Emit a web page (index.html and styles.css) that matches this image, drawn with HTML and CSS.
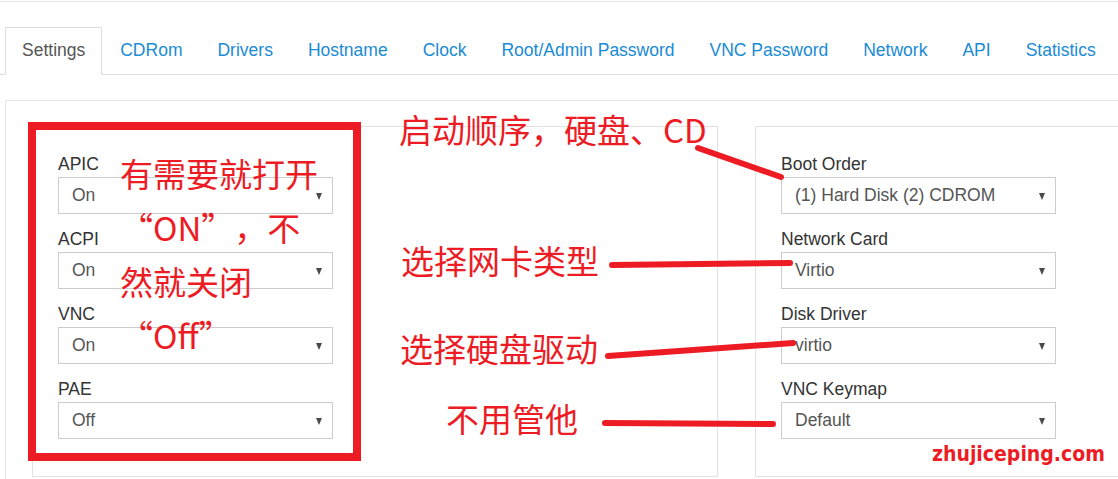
FILE: index.html
```html
<!DOCTYPE html>
<html lang="zh-CN">
<head>
<meta charset="utf-8">
<title>VPS Settings</title>
<link rel="stylesheet" href="styles.css">
</head>
<body>
<div class="page">
  <div class="topline"></div>
  <ul class="tabs">
    <li class="tab active">Settings</li>
    <li class="tab">CDRom</li>
    <li class="tab">Drivers</li>
    <li class="tab">Hostname</li>
    <li class="tab">Clock</li>
    <li class="tab">Root/Admin Password</li>
    <li class="tab">VNC Password</li>
    <li class="tab">Network</li>
    <li class="tab">API</li>
    <li class="tab">Statistics</li>
  </ul>
  <div class="content">
    <div class="panel">
      <div class="field"><div class="label">APIC</div><div class="select"><span>On</span><i class="caret"></i></div></div>
      <div class="field"><div class="label">ACPI</div><div class="select"><span>On</span><i class="caret"></i></div></div>
      <div class="field"><div class="label">VNC</div><div class="select"><span>On</span><i class="caret"></i></div></div>
      <div class="field"><div class="label">PAE</div><div class="select"><span>Off</span><i class="caret"></i></div></div>
    </div>
    <div class="panel">
      <div class="field"><div class="label">Boot Order</div><div class="select"><span>(1) Hard Disk (2) CDROM</span><i class="caret"></i></div></div>
      <div class="field"><div class="label">Network Card</div><div class="select"><span>Virtio</span><i class="caret"></i></div></div>
      <div class="field"><div class="label">Disk Driver</div><div class="select"><span>virtio</span><i class="caret"></i></div></div>
      <div class="field"><div class="label">VNC Keymap</div><div class="select"><span>Default</span><i class="caret"></i></div></div>
    </div>
  </div>

  <div class="redbox"></div>
  <div class="note note-left">有需要就打开<br><span class="ql">“</span>ON<span class="qr">”</span>，不<br>然就关闭<br><span class="ql">“</span>Off<span class="qr">”</span></div>
  <div class="note note-boot">启动顺序，硬盘、CD</div>
  <div class="note note-nic">选择网卡类型</div>
  <div class="note note-disk">选择硬盘驱动</div>
  <div class="note note-key">不用管他</div>
  <svg class="strokes" width="1118" height="479" viewBox="0 0 1118 479">
    <path d="M698 148 L781 177" />
    <path d="M612 265 L790 263" />
    <path d="M608 356 L793 343" />
    <path d="M605 423 L773 424" />
  </svg>
  <div class="watermark">zhujiceping.com</div>
</div>
</body>
</html>
```
FILE: styles.css
```css
html, body {
  margin: 0;
  padding: 0;
  overflow: hidden;
  background: #fff;
}
.page {
  position: relative;
  width: 1118px;
  height: 479px;
  overflow: hidden;
  font-family: "Liberation Sans", Arial, sans-serif;
  font-size: 17.5px;
  color: #333;
}
.topline {
  height: 1px;
  margin-top: 1px;
  background: #e5e5e5;
}
.tabs {
  list-style: none;
  margin: 25px 0 0 0;
  padding: 0 0 0 5px;
  display: flex;
  border-bottom: 1px solid #dddddd;
  width: 1400px;
}
.tab {
  flex: none;
  line-height: 44px;
  padding: 0 16px 2px;
  box-sizing: border-box;
  height: 48px;
  border: 1px solid transparent;
  margin: 0 1px -1px 0;
  color: #1a8bd5;
  white-space: nowrap;
}
.tab.active {
  color: #555;
  background: #fff;
  border-color: #dddddd #dddddd transparent;
}
.content {
  margin: 25px 0 0 5px;
  border: 1px solid #e5e5e5;
  width: 1500px;
  padding: 25px 0 40px 26px;
  display: flex;
  gap: 37px;
}
.panel {
  flex: none;
  width: 686px;
  box-sizing: border-box;
  border: 1px solid #e2e2e2;
  padding: 27px 25px 22px;
}
.field {
  margin-bottom: 15px;
}
.label {
  line-height: 21px;
  margin-bottom: 2px;
  color: #333;
}
.select {
  width: 275px;
  height: 37px;
  box-sizing: border-box;
  border: 1px solid #cccccc;
  display: flex;
  align-items: center;
  padding: 0 10px 0 13px;
  color: #555;
  line-height: 35px;
}
.select span {
  flex: 1;
  white-space: nowrap;
}
.caret {
  width: 0;
  height: 0;
  border-top: 7px solid #4a4a4a;
  border-left: 3.5px solid transparent;
  border-right: 3.5px solid transparent;
  margin-top: 1px;
}
.redbox {
  position: absolute;
  left: 28px;
  top: 122px;
  width: 333px;
  height: 339px;
  box-sizing: border-box;
  border: 8px solid #ed1c24;
}
.note {
  position: absolute;
  font-family: "Noto Sans CJK SC", sans-serif;
  font-size: 33px;
  line-height: 33px;
  color: #ed1c24;
  white-space: nowrap;
}
.note-left {
  left: 120px;
  top: 146px;
  line-height: 54px;
}
.ql, .qr {
  display: inline-block;
  width: 33px;
}
.ql { text-align: right; }
.qr { text-align: left; }
.note-boot { left: 399px; top: 113px; }
.note-nic { left: 401px; top: 244px; }
.note-disk { left: 400px; top: 332px; }
.note-key { left: 446px; top: 402px; }
.strokes {
  position: absolute;
  left: 0;
  top: 0;
  pointer-events: none;
}
.strokes path {
  fill: none;
  stroke: #ed1c24;
  stroke-width: 6;
  stroke-linecap: round;
}
.watermark {
  position: absolute;
  left: 932px;
  top: 441px;
  font-family: "DejaVu Sans Condensed", "DejaVu Sans", sans-serif;
  font-weight: bold;
  font-size: 21px;
  line-height: 26px;
  color: #ed1c24;
}
```
